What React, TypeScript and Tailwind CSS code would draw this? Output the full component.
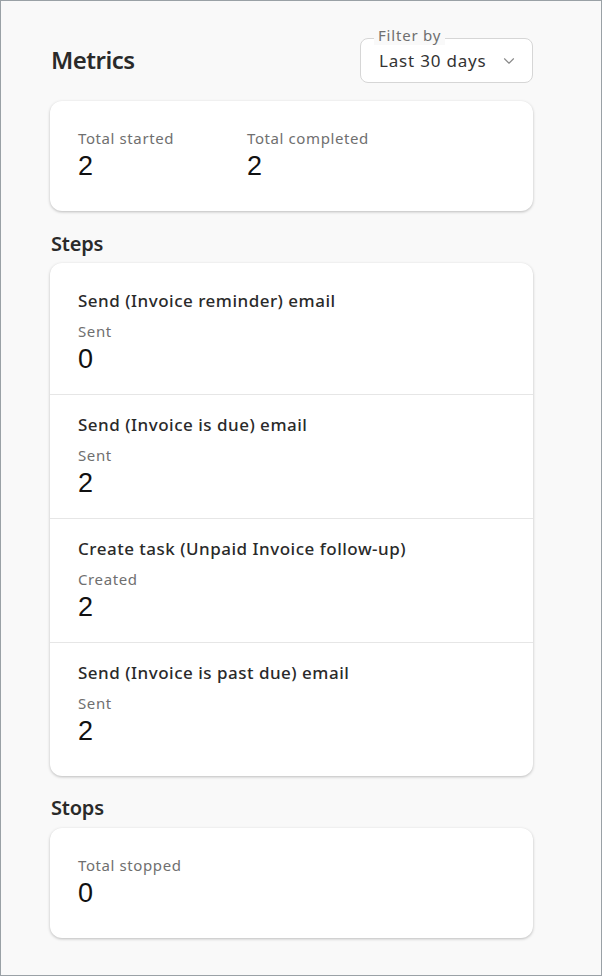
import React from "react";
import { ChevronDown } from "lucide-react";

const steps = [
  { title: "Send (Invoice reminder) email", label: "Sent", value: 0 },
  { title: "Send (Invoice is due) email", label: "Sent", value: 2 },
  { title: "Create task (Unpaid Invoice follow-up)", label: "Created", value: 2 },
  { title: "Send (Invoice is past due) email", label: "Sent", value: 2 },
];

function Stat({ label, value }: { label: string; value: number }) {
  return (
    <div className="flex flex-col">
      <span className="text-[15px] leading-[20px] tracking-[0.6px] text-[#6f6f6f]">{label}</span>
      <span
        className="mt-[2px] text-[27px] leading-[32px] text-[#111]"
        style={{ fontFamily: "'Liberation Sans', Arial, sans-serif" }}
      >
        {value}
      </span>
    </div>
  );
}

export default function App() {
  return (
    <div
      className="w-[602px] h-[976px] bg-[#f9f9f9] border border-[#9aa1a6] overflow-hidden"
      style={{ fontFamily: "'Noto Sans', sans-serif" }}
    >
      <div className="w-[483px] ml-[49px] pt-[37px]">
        {/* Header */}
        <div className="flex items-end justify-between">
          <h1 className="text-[24px] font-semibold tracking-[-0.5px] text-[#2a2a2a] pb-[5px] ml-[1px]">Metrics</h1>
          <div className="relative w-[173px] h-[45px] rounded-[8px] border border-[#d6d6d6] bg-white flex items-center pl-[18px] pr-[14px]">
            <span className="absolute left-[13px] -top-[14px] px-[4px] bg-[#f9f9f9] text-[15px] leading-[20px] tracking-[0.8px] text-[#6f6f6f]">
              Filter by
            </span>
            <span className="flex-1 text-[17px] tracking-[0.8px] text-[#333] pt-[1px]">Last 30 days</span>
            <ChevronDown className="w-[18px] h-[18px] text-[#8a8a8a]" strokeWidth={1.5} />
          </div>
        </div>

        {/* Totals */}
        <div className="mt-[18px] bg-white rounded-[12px] shadow-[0_1px_3px_rgba(0,0,0,0.25)] h-[110px] px-[28px] pt-[27px] flex">
          <div className="w-[169px]">
            <Stat label="Total started" value={2} />
          </div>
          <Stat label="Total completed" value={2} />
        </div>

        {/* Steps */}
        <h2 className="mt-[17px] text-[20px] font-semibold tracking-[-0.2px] text-[#2a2a2a] leading-[28px] ml-[1px] pt-[2px]">Steps</h2>
        <div className="mt-[5px] bg-white rounded-[12px] shadow-[0_1px_3px_rgba(0,0,0,0.25)] pt-[8px] pb-[9px]">
          {steps.map((s, i) => (
            <div
              key={s.title}
              className={`h-[124px] px-[28px] pt-[18px] ${i < steps.length - 1 ? "border-b border-[#e6e6e6]" : ""}`}
            >
              <div className="text-[17px] leading-[24px] font-medium tracking-[0.5px] text-[#2a2a2a]">{s.title}</div>
              <div className="mt-[8px]">
                <Stat label={s.label} value={s.value} />
              </div>
            </div>
          ))}
        </div>

        {/* Stops */}
        <h2 className="mt-[17px] text-[20px] font-semibold tracking-[-0.2px] text-[#2a2a2a] leading-[28px] ml-[1px] pt-[1px]">Stops</h2>
        <div className="mt-[6px] bg-white rounded-[12px] shadow-[0_1px_3px_rgba(0,0,0,0.25)] h-[110px] px-[28px] pt-[27px]">
          <Stat label="Total stopped" value={0} />
        </div>
      </div>
    </div>
  );
}
